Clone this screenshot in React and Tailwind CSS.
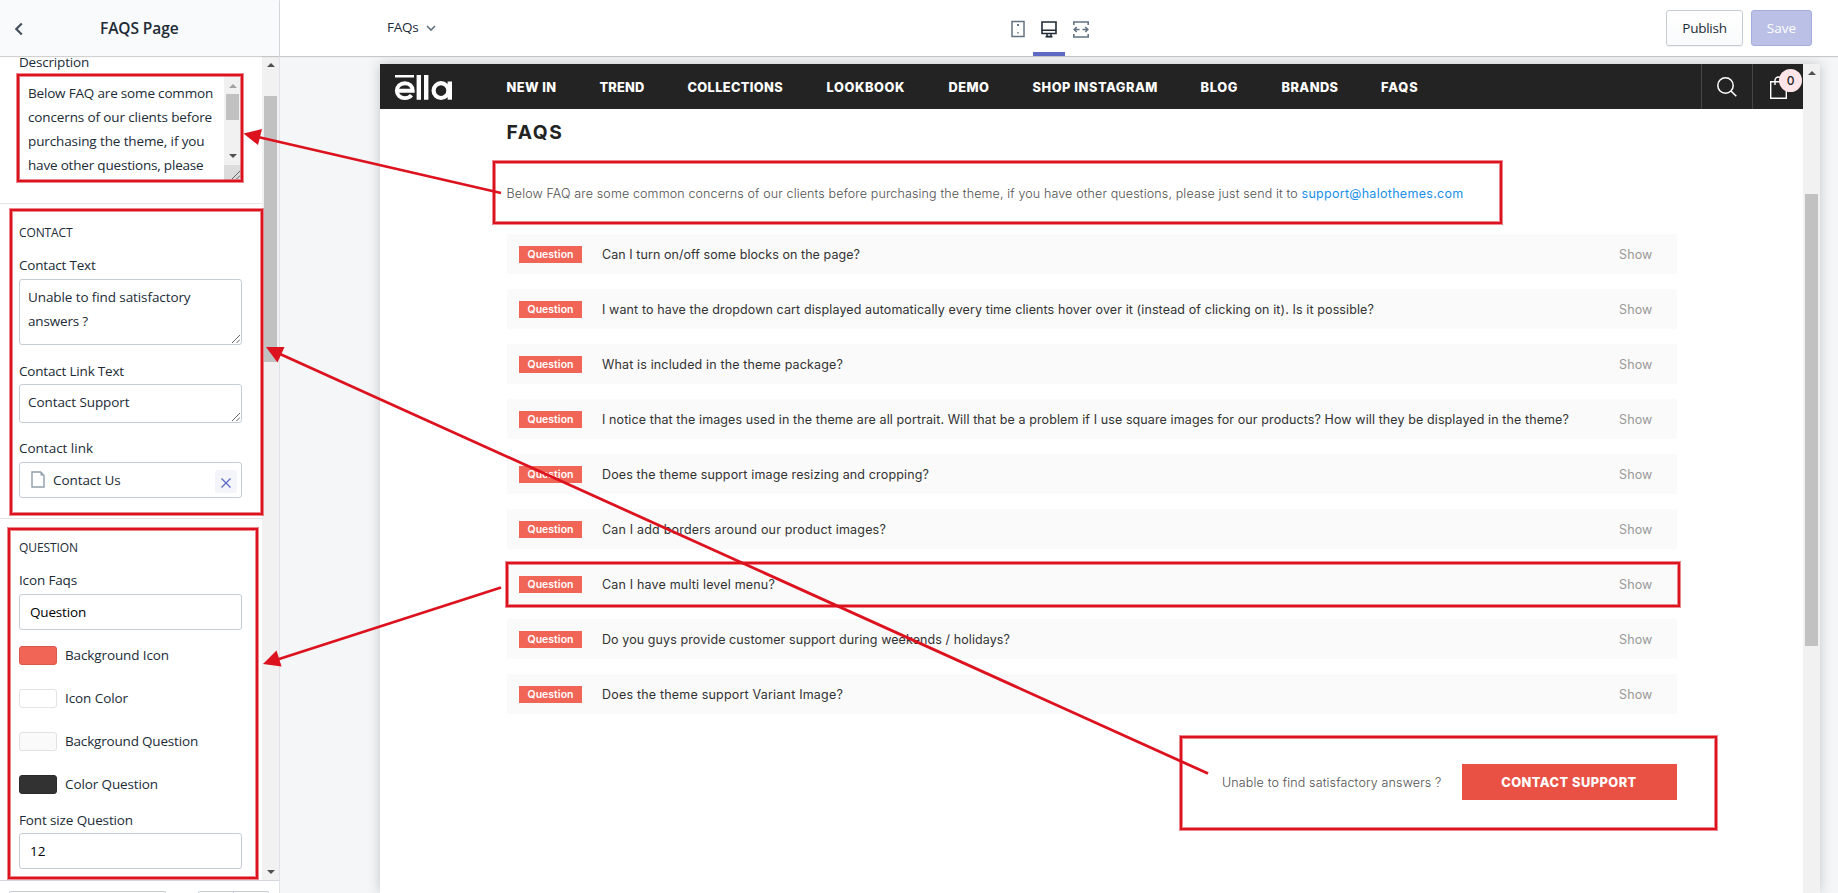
import { useLayoutEffect, useRef, useState } from "react";

/* Tracks a line of text so that it fills the given width. */
function Fit({ w, className = "", children }) {
  const ref = useRef(null);
  const [tracking, setTracking] = useState(0);
  useLayoutEffect(() => {
    const natural = ref.current.getBoundingClientRect().width;
    setTracking((w - natural) / ref.current.textContent.length);
  }, [w]);
  return (
    <span
      ref={ref}
      className={`inline-block whitespace-pre ${className}`}
      style={{ letterSpacing: `${tracking}px` }}
    >
      {children}
    </span>
  );
}

function Label({ w, className, children }) {
  return (
    <div className={`h-5 leading-5 ${className}`}>
      <Fit w={w}>{children}</Fit>
    </div>
  );
}

function Heading({ w, children }) {
  return (
    <h2 className="mt-[19px] h-5 text-[12px] font-medium leading-5">
      <Fit w={w}>{children}</Fit>
    </h2>
  );
}

function Triangle({ down, className }) {
  return (
    <svg width="8" height="4" viewBox="0 0 8 4" className={className}>
      <path d={down ? "M0 0h8L4 4z" : "M0 4h8L4 0z"} fill="currentColor" />
    </svg>
  );
}

function Grip({ className }) {
  return (
    <svg width="8" height="8" viewBox="0 0 8 8" className={`absolute ${className}`}>
      <path d="M0 8L8 0M4.500 8L8 4.500" stroke="#555" strokeWidth="0.9" />
    </svg>
  );
}

function Field({ className, children }) {
  return (
    <div className={`relative w-[223px] rounded-[3px] border border-[#c4cdd5] bg-white ${className}`}>
      {children}
    </div>
  );
}

const swatches = [
  ["Background Icon", 104, "bg-[#f16556] border-[#d9584b]"],
  ["Icon Color", 63, "bg-white border-[#e3e3e3]"],
  ["Background Question", 133, "bg-[#fafafa] border-[#e1e1e1]"],
  ["Color Question", 93, "bg-[#323232] border-[#2a2a2a]"],
];

function Sidebar() {
  return (
    <aside className="flex h-full w-[280px] shrink-0 flex-col border-r border-[#dfe3e8] bg-white font-['Open_Sans',sans-serif] text-[13.500px] text-[#212b36]">
      <header className="z-10 flex h-14 shrink-0 items-center bg-[#f9fafb] shadow-[0_1px_1px_rgba(0,0,0,0.18)]">
        <svg width="10" height="14" viewBox="0 0 10 14" className="ml-[14px] mt-[2px]">
          <path d="M7.800 1.500L2.300 7l5.500 5.500" fill="none" stroke="#454f5b" strokeWidth="2.200" />
        </svg>
        <h1 className="ml-[76px] text-[15.500px] font-semibold leading-6">
          <Fit w={78.500}>FAQS Page</Fit>
        </h1>
      </header>

      <div className="flex min-h-0 flex-1">
        <div className="w-[262px]">
          <section className="-mt-1 h-[151px] pl-[19px]">
            <Label w={70}>Description</Label>
            <Field className="mt-[2px] flex h-[107px] overflow-hidden">
              <div className="flex-1 pl-2 pt-[6px] leading-6">
                <Fit w={185}>Below FAQ are some common</Fit>
                <Fit w={184}>concerns of our clients before</Fit>
                <Fit w={176.500}>purchasing the theme, if you</Fit>
                <Fit w={175.500}>have other questions, please</Fit>
              </div>
              <div className="flex w-[17px] shrink-0 flex-col items-center bg-[#f1f1f1]">
                <Triangle className="mt-[9px] text-[#a3a3a3]" />
                <div className="mt-[6px] h-[26px] w-[13px] bg-[#c1c1c1]" />
                <Triangle down className="mt-[34px] text-[#505050]" />
                <div className="mt-auto h-[15px] w-full bg-[#dcdcdc]" />
              </div>
              <Grip className="bottom-[1px] right-[1px]" />
            </Field>
          </section>

          <section className="h-[315px] border-t border-[#e3e5e8] pl-[19px]">
            <Heading w={53.500}>CONTACT</Heading>
            <Label w={76.500} className="mt-3">Contact Text</Label>
            <Field className="mt-1 h-[66px] pl-2 pt-[5px] leading-6">
              <Fit w={162.500}>Unable to find satisfactory</Fit>
              <br />
              <Fit w={60}>answers ?</Fit>
              <Grip className="bottom-[1px] right-[1px]" />
            </Field>
            <Label w={105} className="mt-4">Contact Link Text</Label>
            <Field className="mt-[3px] h-[39px] pl-2 pt-[5px] leading-6">
              <Fit w={101.500}>Contact Support</Fit>
              <Grip className="bottom-[1px] right-[1px]" />
            </Field>
            <Label w={74} className="mt-[15px]">Contact link</Label>
            <Field className="mt-1 flex h-9 items-center pl-[11px] pr-1">
              <svg width="14" height="17" viewBox="0 0 14 17" className="-mt-[2px]">
                <path d="M1 1h8.500L13 4.500V16H1z" fill="none" stroke="#919eab" strokeWidth="1.400" />
                <path d="M9.500 1v3.500H13z" fill="#919eab" />
              </svg>
              <span className="ml-2">
                <Fit w={67.500}>Contact Us</Fit>
              </span>
              <span className="ml-auto mt-[3px] flex h-[23px] w-[22px] items-center justify-center rounded-[3px] bg-[#f4f5fa]">
                <svg width="10" height="10" viewBox="0 0 10 10" className="mt-[2px]">
                  <path d="M.5.5l9 9M9.500.5l-9 9" stroke="#5c6ac4" strokeWidth="1.300" />
                </svg>
              </span>
            </Field>
          </section>

          <section className="border-t border-[#e3e5e8] pl-[19px]">
            <Heading w={59}>QUESTION</Heading>
            <Label w={58} className="mt-3">Icon Faqs</Label>
            <Field className="mt-1 flex h-9 items-center pl-[10px] text-black">
              <Fit w={56}>Question</Fit>
            </Field>
            <div className="mt-4 flex flex-col gap-6">
              {swatches.map(([name, w, color]) => (
                <div key={name} className="flex h-[19px] items-center gap-2">
                  <span className={`h-full w-[38px] rounded-[3px] border ${color}`} />
                  <Fit w={w}>{name}</Fit>
                </div>
              ))}
            </div>
            <Label w={114} className="mt-4">Font size Question</Label>
            <Field className="mt-[3px] flex h-9 items-center pl-[10px] text-black">
              <Fit w={15.500}>12</Fit>
            </Field>
          </section>
        </div>

        <div className="flex w-[17px] flex-col items-center bg-[#f1f1f1]">
          <Triangle className="mt-[7px] text-[#505050]" />
          <div className="mt-[29px] h-[266px] w-[13px] bg-[#c1c1c1]" />
          <Triangle down className="mb-[6px] mt-auto text-[#505050]" />
        </div>
      </div>

      <footer className="flex h-[13px] shrink-0 items-end overflow-hidden border-t border-[#d3d6da] pl-[9px]">
        <div className="h-[2px] w-[157px] rounded-t-[2px] border border-b-0 border-[#c4cdd5]" />
        <div className="ml-8 h-[2px] w-9 rounded-tl-[2px] border border-b-0 border-[#c4cdd5]" />
        <div className="h-[2px] w-[35px] rounded-tr-[2px] border border-b-0 border-l-0 border-[#c4cdd5]" />
      </footer>
    </aside>
  );
}

function Toolbar() {
  return (
    <header className="z-10 flex h-14 shrink-0 items-center bg-white pl-[107px] pr-[26px] font-['Open_Sans',sans-serif] text-[13.500px] text-[#212b36] shadow-[0_1px_1px_rgba(0,0,0,0.18)]">
      <span className="-mt-[2px] w-[31px]">
        <Fit w={31.500}>FAQs</Fit>
      </span>
      <svg width="10" height="7" viewBox="0 0 10 7" className="ml-2">
        <path d="M1 1l4 4 4-4" fill="none" stroke="#637381" strokeWidth="1.700" />
      </svg>
      <nav className="ml-[566px] flex h-full">
        <span className="flex w-[31px] items-center justify-center">
          <svg width="14" height="18" viewBox="0 0 14 18" className="mt-[2px]">
            <rect x="1" y="1.500" width="12" height="15" fill="none" stroke="#637381" strokeWidth="1.500" />
            <path d="M6 4h2v2H6zM6.300 12h1.400v1.500H6.300z" fill="#637381" />
          </svg>
        </span>
        <span className="flex w-8 items-center justify-center border-b-4 border-[#5c6ac4]">
          <svg width="16" height="17" viewBox="0 0 16 17" className="mt-[6px]">
            <path d="M1 1h14v11.500H1zM1 9.200h14" fill="none" stroke="#212b36" strokeWidth="1.600" />
            <path d="M6 12.500v3h4v-3" fill="none" stroke="#212b36" strokeWidth="1.500" />
            <path d="M4.500 15.700h7" stroke="#212b36" strokeWidth="1.500" />
          </svg>
        </span>
        <span className="flex w-[31px] items-center justify-center">
          <svg width="16" height="17" viewBox="0 0 16 17" className="mt-[2px]">
            <path
              d="M.8 4V1h14.400v3M.8 13v3h14.400v-3M6.500 8.500H1.500M9.500 8.500h5M3.700 6L1.200 8.500 3.700 11M12.300 6l2.500 2.500-2.500 2.500"
              fill="none"
              stroke="#637381"
              strokeWidth="1.600"
            />
          </svg>
        </span>
      </nav>
      <button className="ml-auto flex h-9 w-[77px] items-center justify-center rounded-[3px] border border-[#c4cdd5] bg-gradient-to-b from-white to-[#f9fafb] shadow-[0_1px_0_rgba(22,29,37,0.05)]">
        <Fit w={44.500}>Publish</Fit>
      </button>
      <button className="ml-2 flex h-9 w-[61px] items-center justify-center rounded-[3px] border border-[#a5addf] bg-[#bac0e6] text-white">
        <Fit w={29.500}>Save</Fit>
      </button>
    </header>
  );
}

const menu = [
  ["NEW IN", 50, "w-[93px]"],
  ["TREND", 45, "w-[88px]"],
  ["COLLECTIONS", 95.500, "w-[139px]"],
  ["LOOKBOOK", 78.500, "w-[122px]"],
  ["DEMO", 41, "w-[84px]"],
  ["SHOP INSTAGRAM", 125.500, "w-[168px]"],
  ["BLOG", 37.500, "w-[81px]"],
  ["BRANDS", 57, "w-[99.500px]"],
  ["FAQS", 37.500, "w-[40px]"],
];

function StoreNav() {
  return (
    <nav className="flex h-[45px] w-full shrink-0 bg-[#232323] text-white">
      <svg width="58" height="26" viewBox="0 0 58 26" className="ml-[14px] mt-[11px]" aria-label="ella">
        <path d="M1 0h19v2.600H1zM22.600 0h4.400v24.700h-4.400zM30 0h4.400v24.700H30z" fill="#fff" />
        <path d="M3 15.800h15.700c0-4.700-3.400-7.600-7.900-7.600s-8 3.300-8 7.600 3.500 7.300 8 7.300c3 0 5.200-1 6.600-3" fill="none" stroke="#fff" strokeWidth="3.900" />
        <circle cx="47" cy="15.600" r="7.400" fill="none" stroke="#fff" strokeWidth="4.200" />
        <path d="M53.600 6.500H58v18.200h-4.400z" fill="#fff" />
      </svg>
      <ul className="ml-[54.500px] flex items-center pt-[2px] text-[12.800px] font-extrabold">
        {menu.map(([name, w, box]) => (
          <li key={name} className={box}>
            <Fit w={w}>{name}</Fit>
          </li>
        ))}
      </ul>
      <span className="ml-auto flex w-[51px] items-center justify-center border-l border-[#454545]">
        <svg width="20" height="20" viewBox="0 0 20 20">
          <circle cx="8.500" cy="8.500" r="7.700" fill="none" stroke="#fff" strokeWidth="1.500" />
          <path d="M14 14l5.300 5.300" stroke="#fff" strokeWidth="1.600" />
        </svg>
      </span>
      <span className="relative w-[51px] border-l border-[#454545]">
        <svg width="17" height="24" viewBox="0 0 17 24" className="ml-[17px] mt-[12px]">
          <path d="M.700 5.700h15.600v16.600H.700zM5 9V4.500a3.500 3.500 0 0 1 7 0V9" fill="none" stroke="#fff" strokeWidth="1.400" />
        </svg>
        <span className="absolute right-[1px] top-[5px] flex h-[23px] w-[23px] items-center justify-center rounded-full bg-[#ffe5e8] text-[12px] font-medium text-[#232323]">
          0
        </span>
      </span>
    </nav>
  );
}

const questions = [
  ["Can I turn on/off some blocks on the page?", 258],
  ["I want to have the dropdown cart displayed automatically every time clients hover over it (instead of clicking on it). Is it possible?", 772],
  ["What is included in the theme package?", 241],
  ["I notice that the images used in the theme are all portrait. Will that be a problem if I use square images for our products? How will they be displayed in the theme?", 967],
  ["Does the theme support image resizing and cropping?", 327],
  ["Can I add borders around our product images?", 284],
  ["Can I have multi level menu?", 173],
  ["Do you guys provide customer support during weekends / holidays?", 408],
  ["Does the theme support Variant Image?", 241],
];

function Preview() {
  return (
    <div className="flex flex-1 bg-[#f4f6f8] pl-[100px] pt-2">
      <div className="flex w-[1440px] bg-white font-['Inter',sans-serif] shadow-[0_0_12px_rgba(0,0,0,0.2)]">
        <div className="flex w-[1423px] flex-col">
          <StoreNav />
          <main className="ml-[126.500px] w-[1170px]">
            <h1 className="mt-[10px] h-[26px] text-[19.200px] font-bold leading-[26px] text-[#232323]">
              <Fit w={57}>FAQS</Fit>
            </h1>
            <p className="mt-[39px] h-5 whitespace-nowrap text-[12.500px] leading-5 text-[#505050]">
              <Fit w={795} className="font-light">
                {"Below FAQ are some common concerns of our clients before purchasing the theme, if you have other questions, please just send it to "}
              </Fit>
              <a className="text-[#1990e8]">
                <Fit w={162}>support@halothemes.com</Fit>
              </a>
            </p>
            <ul className="mt-[30px] flex flex-col gap-[15px]">
              {questions.map(([text, w]) => (
                <li key={text} className="flex h-10 items-center bg-[#fafafa] pl-[12.500px] pr-6 text-[12.500px] text-[#323232]">
                  <span className="mt-[1px] flex h-[17px] w-[63px] items-center justify-center bg-[#f16556] text-[10.500px] font-semibold text-white">
                    <Fit w={46}>Question</Fit>
                  </span>
                  <span className="ml-5 pt-[3px]">
                    <Fit w={w}>{text}</Fit>
                  </span>
                  <span className="ml-auto pt-[3px] text-[#999]">
                    <Fit w={33.500}>Show</Fit>
                  </span>
                </li>
              ))}
            </ul>
            <div className="mt-[50px] flex items-center justify-end gap-5 text-[12.500px] text-[#505050]">
              <Fit w={219.500} className="pt-[2px] font-light">Unable to find satisfactory answers ?</Fit>
              <button className="flex h-9 w-[215px] items-center justify-center bg-[#e95144] pt-[2px] text-[12.800px] font-extrabold text-white">
                <Fit w={135.500}>CONTACT SUPPORT</Fit>
              </button>
            </div>
          </main>
        </div>
        <div className="flex w-[17px] flex-col items-center bg-[#f1f1f1]">
          <Triangle className="mt-[7px] text-[#505050]" />
          <div className="mt-[119px] h-[452px] w-[13px] bg-[#c1c1c1]" />
        </div>
      </div>
    </div>
  );
}

/* Callout frames: x, y, width, height. */
const frames = [
  [18, 75, 224, 106],
  [11, 210, 251, 304],
  [9, 529, 248, 349],
  [494, 162, 1007, 61],
  [507, 563, 1172, 43],
  [1181, 737, 535, 92],
];

function Annotations() {
  return (
    <svg width="1838" height="893" className="pointer-events-none absolute inset-0 z-20">
      {frames.map(([x, y, w, h]) => (
        <g key={`${x}-${y}`} fill="none" stroke="#dc121f">
          <rect x={x} y={y} width={w} height={h} strokeWidth="4" strokeOpacity="0.5" />
          <rect x={x} y={y} width={w} height={h} strokeWidth="2" />
        </g>
      ))}
      <g stroke="#dc121f" strokeWidth="2.800">
        <path d="M501 193L258 137" />
        <path d="M1208 773.500L280 354" />
        <path d="M501 587.500L276 660" />
      </g>
      <g fill="#dc121f">
        <path d="M243.500 133.500l18.500-4.500-4 16z" />
        <path d="M266 347h18.500l-7 15.500z" />
        <path d="M263 664l13.500-13.500 5 16z" />
      </g>
    </svg>
  );
}

export default function App() {
  return (
    <div className="relative flex h-[893px] w-[1838px] overflow-hidden bg-[#f4f6f8]">
      <Sidebar />
      <div className="flex min-w-0 flex-1 flex-col">
        <Toolbar />
        <Preview />
      </div>
      <Annotations />
    </div>
  );
}
